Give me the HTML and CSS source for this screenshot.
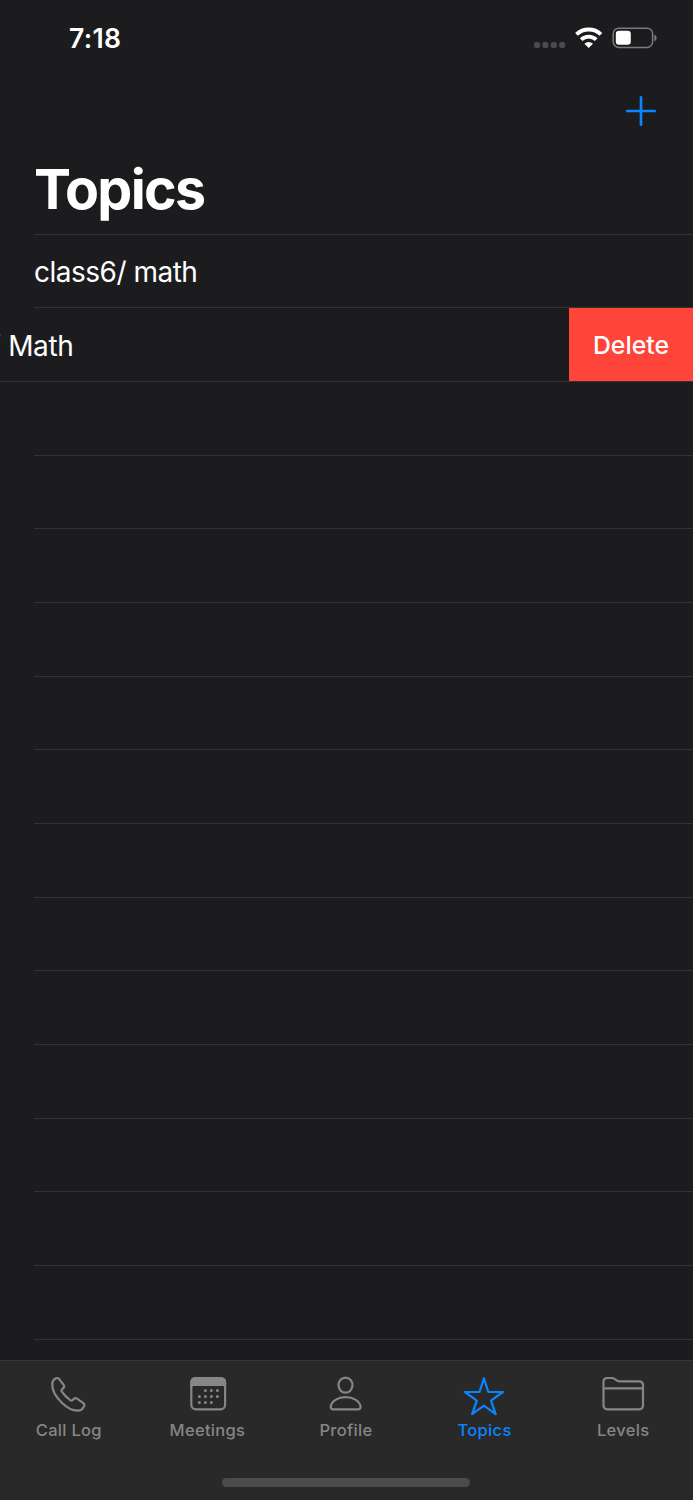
FILE: index.html
```html
<!DOCTYPE html>
<html lang="en">
<head>
<meta charset="utf-8">
<title>Topics</title>
<link rel="stylesheet" href="styles.css">
</head>
<body>
<div class="screen">
  <header class="status">
    <span class="time">7:18</span>
    <svg class="status-icons" width="124" height="24" viewBox="0 0 124 24">
      <g fill="#4b4b4d"><rect x="0" y="16" width="6" height="6" rx="2"/><rect x="8.4" y="16" width="6" height="6" rx="2"/><rect x="16.8" y="16" width="6" height="6" rx="2"/><rect x="25.2" y="16" width="6" height="6" rx="2"/></g>
      <g fill="none" stroke="#fff" stroke-width="3.9"><path d="M42.5 8.4a17.6 17.6 0 0 1 24.4 0"/><path d="M47.2 13.7a10.7 10.7 0 0 1 15 0"/></g>
      <path d="M54.7 22 50.4 17.700a6 6 0 0 1 8.600 0z" fill="#fff"/>
      <rect x="79.2" y="2.2" width="39.4" height="19.2" rx="5.6" fill="none" stroke="#7b7b7d" stroke-width="1.5"/>
      <rect x="81.8" y="4.8" width="15" height="14" rx="3.2" fill="#fff"/>
      <path d="M120.3 8.4c3 1.4 3 5.6 0 7z" fill="#7b7b7d"/>
    </svg>
  </header>
  <div class="navbar">
    <svg class="add" width="30" height="30" viewBox="0 0 30 30"><path d="M15 1.3v27.4M1.3 15h27.4" stroke="#0a84ff" stroke-width="2.7" stroke-linecap="round"/></svg>
  </div>
  <h1 class="title"><span>Topics</span></h1>
  <main class="list">
    <div class="row first"><span class="name">class6/ math</span></div>
    <div class="row swiped"><span class="name"><span class="slash">/</span> Math</span><button class="delete">Delete</button></div>
    <div class="row"></div><div class="row"></div><div class="row"></div><div class="row"></div>
    <div class="row"></div><div class="row"></div><div class="row"></div><div class="row"></div>
    <div class="row"></div><div class="row"></div><div class="row"></div><div class="row"></div><div class="row"></div>
  </main>
  <nav class="tabs">
    <a class="tab"><svg class="icon" viewBox="0 0 60 44"><path d="M13.2 11.5C13.4 9 15 7.200 17 6.300c1.200-.5 2.300-.3 3.200.8l4.600 6c.8 1.200.5 1.900-.4 2.900l-1.500 1.600c-.6.7-.6 1.300-.1 2.100 2.200 3.300 5 6 8.400 8.400.8.6 1.500.6 2.300 0l1.600-1.400c1-.8 1.700-.8 2.900-.1l6 4.200c1.400 1 1.700 2 1.100 3.300-1.100 2.600-3.100 4.300-5.600 4.500-5.600.4-11.300-2.700-16.400-7.600-5.700-5.500-10.200-12.900-9.900-19.500z"/></svg><span class="lbl">Call Log</span></a>
    <a class="tab"><svg class="icon" viewBox="0 0 60 44"><rect x="13.3" y="6" width="33.8" height="31.3" rx="4.5"/><path class="solid" d="M13.3 14V10a4.500 4.500 0 0 1 4.500-4h25a4.500 4.500 0 0 1 4.300 4v4q-.5-1-2-1H15.300q-1.500 0-2 1z"/><path class="dots" d="M27.400 18.400h0M33.400 18.400h0M39.400 18.400h0M21.400 24.400h0M27.400 24.400h0M33.400 24.400h0M39.400 24.400h0M21.400 30.400h0M27.400 30.400h0M33.400 30.400h0"/></svg><span class="lbl">Meetings</span></a>
    <a class="tab"><svg class="icon" viewBox="0 0 60 44"><ellipse cx="29.5" cy="13.1" rx="7" ry="7.500"/><path d="M17.500 37.300h24.300q2.800 0 2.800-2.600C43.800 29 37.500 25.200 29.600 25.200S15.500 29 14.700 34.700q0 2.600 2.800 2.600z"/></svg><span class="lbl">Profile</span></a>
    <a class="tab active"><svg class="icon" viewBox="0 0 60 44"><path d="M28.900 6.300 33.300 20H47.900L36 28.600 40.700 42.100 28.900 33.700 17.100 42.100 21.800 28.600 9.900 20H24.500z"/></svg><span class="lbl">Topics</span></a>
    <a class="tab"><svg class="icon" viewBox="0 0 60 44"><path d="M9.500 33.300V10q0-4 4-4h4.300q1.600 0 2.900 1l1.800 1.400q1.200.9 2.700.9H45q4 0 4 4v20q0 4-4 4H13.500q-4 0-4-4zM9.500 16.400H49"/></svg><span class="lbl">Levels</span></a>
  </nav>
  <div class="home"><div class="bar"></div></div>
</div>
</body>
</html>
```
FILE: styles.css
```css
* { box-sizing: border-box; }
body { margin: 0; background: #1c1c1e; color: #fff; font-family: Inter, "Liberation Sans", sans-serif; }
.screen { width: 693px; height: 1500px; display: flex; flex-direction: column; overflow: hidden; }
.status { height: 76px; flex: none; display: flex; justify-content: space-between; align-items: center; padding: 0 35px 0 69px; }
.time { font-size: 26.5px; font-weight: 600; letter-spacing: 0.35px; }
.navbar { height: 69px; flex: none; display: flex; justify-content: flex-end; align-items: center; padding-right: 37px; }
.title { height: 89px; flex: none; margin: 0; padding-left: 34px; font-size: 55.5px; line-height: 87px; font-weight: 700; letter-spacing: -1.7px; }
.list { height: 1126px; flex: none; overflow: hidden; }
.row { height: 73.66px; margin-left: 34px; border-bottom: 1px solid #323234; display: flex; align-items: center; justify-content: space-between; font-size: 28px; }
.first { height: 74.4px; border-top: 1px solid #323234; }
.swiped { margin-left: 0; }
.name { white-space: pre; letter-spacing: -0.5px; padding-top: 2px; }
.swiped .name { margin-left: -9px; letter-spacing: -0.4px; }
.slash { color: #8a8a8c; }
.delete { width: 124px; align-self: stretch; border: 0; padding: 0; background: #ff453a; color: #fff; font: 500 24.8px Inter, sans-serif; }
.tabs { height: 100px; flex: none; display: flex; background: #292929; border-top: 1px solid #363638; padding-top: 11px; }
.tab { flex: 1; display: flex; flex-direction: column; align-items: center; color: #868686; }
.active { color: #0a84ff; }
.icon { width: 60px; height: 44px; fill: none; stroke: currentColor; stroke-width: 2.2; stroke-linejoin: round; }
.solid { fill: currentColor; }
.dots { stroke-width: 3; stroke-linecap: round; }
.lbl { font-size: 16.5px; line-height: 28px; font-weight: 500; letter-spacing: 0.3px; margin-right: 1px; }
.home { flex: 1; background: #292929; display: flex; justify-content: center; align-items: flex-start; padding: 18px 1px 0 0; }
.bar { width: 248px; height: 9px; border-radius: 5px; background: #4b4b4b; }
```
